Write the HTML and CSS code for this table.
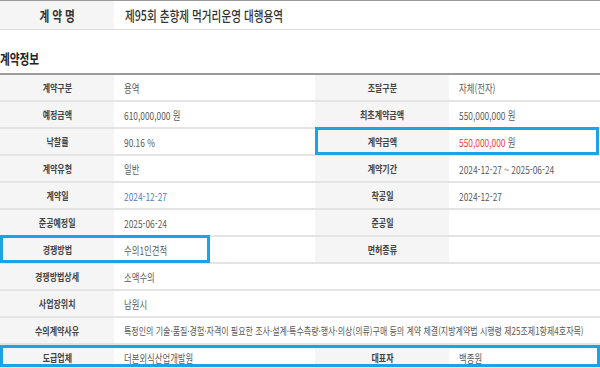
FILE: index.html
```html
<!DOCTYPE html>
<html lang="ko">
<head>
<meta charset="utf-8">
<link rel="stylesheet" href="styles.css">
</head>
<body>
<div class="page">
  <table class="top">
    <tr>
      <th class="top-label"><span class="sq">계 약 명</span></th>
      <td class="top-value"><span class="sq">제95회 춘향제 먹거리운영 대행용역</span></td>
    </tr>
  </table>

  <h2 class="section-title"><span class="sq">계약정보</span></h2>

  <div class="info-wrap">
    <table class="info">
      <colgroup>
        <col class="c1"><col class="c2"><col class="c3"><col class="c4">
      </colgroup>
      <tr><th><span class="sq">계약구분</span></th><td><span class="sq">용역</span></td><th><span class="sq">조달구분</span></th><td><span class="sq">자체(전자)</span></td></tr>
      <tr><th><span class="sq">예정금액</span></th><td><span class="sq">610,000,000 원</span></td><th><span class="sq">최초계약금액</span></th><td><span class="sq">550,000,000 원</span></td></tr>
      <tr><th><span class="sq">낙찰률</span></th><td><span class="sq">90.16 %</span></td><th><span class="sq">계약금액</span></th><td><span class="sq"><span class="red">550,000,000</span> 원</span></td></tr>
      <tr><th><span class="sq">계약유형</span></th><td><span class="sq">일반</span></td><th><span class="sq">계약기간</span></th><td><span class="sq">2024-12-27 ~ 2025-06-24</span></td></tr>
      <tr><th><span class="sq">계약일</span></th><td><span class="sq blue">2024-12-27</span></td><th><span class="sq">착공일</span></th><td><span class="sq">2024-12-27</span></td></tr>
      <tr><th><span class="sq">준공예정일</span></th><td><span class="sq">2025-06-24</span></td><th><span class="sq">준공일</span></th><td></td></tr>
      <tr><th><span class="sq">경쟁방법</span></th><td><span class="sq">수의1인견적</span></td><th><span class="sq">면허종류</span></th><td></td></tr>
      <tr><th><span class="sq">경쟁방법상세</span></th><td colspan="3"><span class="sq">소액수의</span></td></tr>
      <tr><th><span class="sq">사업장위치</span></th><td colspan="3"><span class="sq">남원시</span></td></tr>
      <tr><th><span class="sq">수의계약사유</span></th><td colspan="3" class="long"><span class="sq">특정인의 기술·품질·경험·자격이 필요한 조사·설계·특수측량·행사·의상(의류)구매 등의 계약 체결(지방계약법 시행령 제25조제1항제4호자목)</span></td></tr>
      <tr><th><span class="sq">도급업체</span></th><td><span class="sq">더본외식산업개발원</span></td><th><span class="sq">대표자</span></th><td><span class="sq">백종원</span></td></tr>
    </table>
    <div class="mark mark-amount"></div>
    <div class="mark mark-method"></div>
    <div class="mark mark-company"></div>
  </div>
</div>
</body>
</html>
```

FILE: styles.css
```css
html, body {
  margin: 0;
  padding: 0;
  background: #fff;
}
body {
  font-family: "Noto Sans CJK KR", "Noto Sans", sans-serif;
  color: #444;
  width: 600px;
  height: 368px;
  overflow: hidden;
}
.page {
  width: 600px;
}
.sq {
  display: inline-block;
  white-space: nowrap;
  transform: scaleX(0.76);
  transform-origin: left center;
}
th .sq {
  transform-origin: center center;
}
table {
  border-collapse: collapse;
  width: 600px;
  table-layout: fixed;
}
.top {
  border-top: 1px solid #9a9a9a;
}
.top th, .top td {
  height: 28px;
  padding: 0;
  border-bottom: 1px solid #dcdcdc;
  color: #333;
  font-size: 14px;
}
.top-label {
  width: 114px;
  background: #f5f5f5;
  font-weight: 700;
  text-align: center;
}
.top td.top-value {
  padding-left: 11px;
  text-align: left;
  font-weight: 500;
}
.section-title {
  margin: 0;
  padding: 18px 0 0 0;
  height: 25px;
  font-size: 14px;
  font-weight: 700;
  color: #222;
  line-height: 20px;
}
.info-wrap {
  position: relative;
}
.info {
  border-top: 2px solid #9a9a9a;
}
.c1 { width: 114px; }
.c2 { width: 201px; }
.c3 { width: 134px; }
.c4 { width: 151px; }
.info th, .info td {
  height: 25px;
  padding: 0;
  border-bottom: 2px solid #e4e4e4;
  line-height: 14px;
  white-space: nowrap;
}
.info th {
  background: #f5f5f5;
  color: #444;
  font-size: 10.5px;
  font-weight: 700;
  text-align: center;
}
.info td {
  color: #5a5a5a;
  font-size: 11px;
  padding-left: 10px;
  text-align: left;
}
.info td.long {
  font-size: 10px;
  overflow: hidden;
}
.info td.long .sq {
  transform: scaleX(0.8);
}
.red { color: #f33a3a; }
.blue { color: #4d7fc4; }
.mark {
  position: absolute;
  box-sizing: border-box;
  border: 3px solid #1ba3e6;
}
.mark-amount {
  left: 315px;
  top: 54px;
  width: 284px;
  height: 28px;
}
.mark-method {
  left: 0;
  top: 162px;
  width: 210px;
  height: 28px;
}
.mark-company {
  left: 0;
  top: 272px;
  width: 600px;
  height: 22px;
}
```
